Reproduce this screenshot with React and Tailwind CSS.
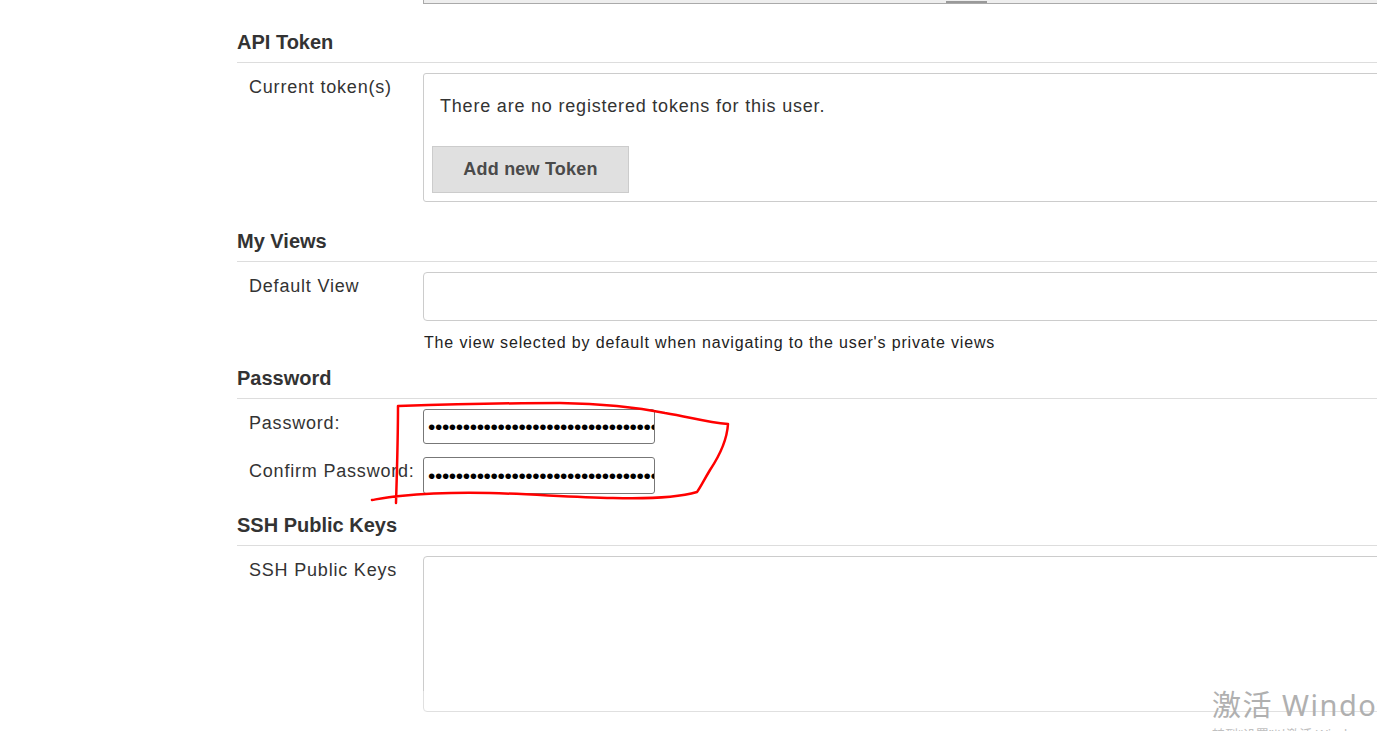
import React from "react";

const Section = ({ title, children }) => (
  <div>
    <div className="border-b border-[#ddd] pb-[8px] text-[20px] font-bold leading-[24px] text-[#333]">
      {title}
    </div>
    <div className="pt-[10px]">{children}</div>
  </div>
);

const Row = ({ label, children, labelTop = "pt-[3px]" }) => (
  <div className="flex">
    <div className={`w-[186px] shrink-0 whitespace-nowrap pl-[12px] text-[18px] leading-[22px] tracking-[0.8px] text-[#333] ${labelTop}`}>
      {label}
    </div>
    <div className="flex-1">{children}</div>
  </div>
);

const dots = "•".repeat(40);

const PasswordBox = ({ h }) => (
  <div
    className={`flex ${h} w-[232px] items-center overflow-hidden whitespace-nowrap rounded-[3px] border border-[#777] pl-[4px] text-[21px] leading-none tracking-[-0.4px] text-black`}
  >
    {dots}
  </div>
);

export default function App() {
  return (
    <div
      className="relative h-[731px] w-full overflow-hidden bg-white"
      style={{ fontFamily: '"Liberation Sans", Arial, sans-serif' }}
    >
      <div className="pl-[237px]">
        {/* bottom of previous field */}
        <div className="ml-[186px] flex h-[4px] items-start border-b border-l border-[#aaa] bg-[#eee]">
          <div className="ml-[522px] mt-[1px] h-[2px] w-[41px] bg-[#999]" />
        </div>

        <div className="mt-[26px]">
          <Section title="API Token">
            <Row label="Current token(s)">
              <div className="w-[1000px] rounded-[3px] border border-[#ccc] px-[8px] pb-[8px] pt-[21px]">
                <div className="pl-[8px] text-[18px] leading-[22px] tracking-[0.8px] text-[#333]">
                  There are no registered tokens for this user.
                </div>
                <button className="mt-[29px] flex h-[47px] w-[197px] items-center justify-center border border-[#ccc] bg-[#e0e0e0] text-[18px] font-bold tracking-[0.2px] text-[#4a4a4a]">
                  Add new Token
                </button>
              </div>
            </Row>
          </Section>
        </div>

        <div className="mt-[27px]">
          <Section title="My Views">
            <Row label="Default View">
              <div className="h-[49px] w-[1000px] rounded-[4px] border border-[#ccc]" />
              <div className="mt-[12px] pl-[1px] text-[16px] leading-[20px] tracking-[0.85px] text-[#222]">
                The view selected by default when navigating to the user's private views
              </div>
            </Row>
          </Section>
        </div>

        <div className="mt-[13px]">
          <Section title="Password">
            <Row label="Password:">
              <PasswordBox h="h-[35px]" />
            </Row>
            <div className="mt-[13px]">
              <Row label="Confirm Password:">
                <PasswordBox h="h-[37px]" />
              </Row>
            </div>
          </Section>
        </div>

        <div className="mt-[19px]">
          <Section title="SSH Public Keys">
            <Row label="SSH Public Keys">
              <div className="h-[156px] w-[1000px] rounded-[4px] border border-[#ccc]" />
            </Row>
          </Section>
        </div>
      </div>

      {/* hand-drawn red annotation */}
      <svg className="pointer-events-none absolute left-0 top-0" width="1377" height="731">
        <path
          d="M396 503 C397 470 398 440 398 406 C430 405 500 403 560 403 C610 404 640 408 665 413 C690 417 705 422 728 424 C727 440 718 458 710 470 C704 480 700 488 697 492 C680 497 650 499 613 498 C570 497 530 494 490 493 C450 492 420 494 400 496 C388 497 378 499 372 500"
          fill="none"
          stroke="#ff0000"
          strokeWidth="2.5"
          strokeLinecap="round"
          strokeLinejoin="round"
        />
      </svg>

      {/* windows activation watermark */}
      <div className="pointer-events-none absolute bottom-0 left-0 h-[40px] w-full bg-white/40" />
      <div
        className="pointer-events-none absolute left-[1212px] top-[687px] whitespace-nowrap text-[29px] leading-[36px] tracking-[1.5px] text-[#b0b0b0]"
        style={{ fontFamily: '"Noto Sans", "Noto Sans CJK SC", sans-serif' }}
      >
        激活 Windows
      </div>
      <div
        className="pointer-events-none absolute left-[1212px] top-[726px] whitespace-nowrap text-[13px] leading-[16px] text-[#c0c0c0]"
        style={{ fontFamily: '"Noto Sans", "Noto Sans CJK SC", sans-serif' }}
      >
        转到“设置”以激活 Windows。
      </div>
    </div>
  );
}
